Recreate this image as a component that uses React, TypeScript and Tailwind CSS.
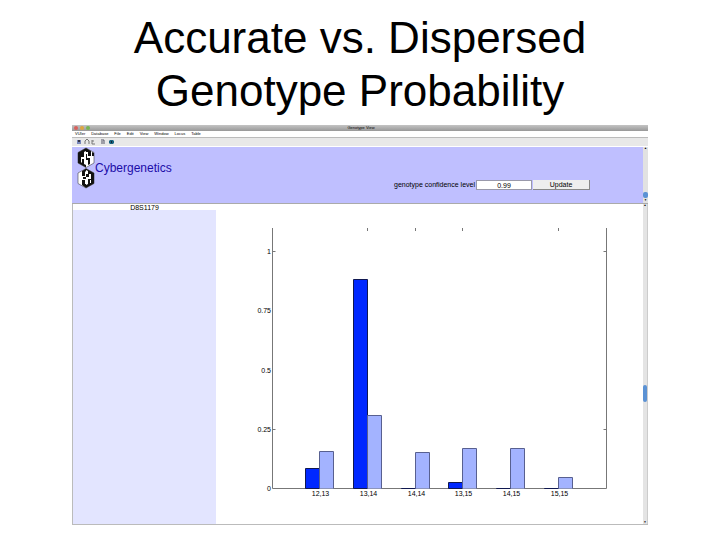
import React, { useState } from 'react';

interface Genotype {
  label: string;
  accurate: number;
  dispersed: number;
}

const menus = ['VUIer', 'Database', 'File', 'Edit', 'View', 'Window', 'Locus', 'Table'];

const genotypes: Genotype[] = [
  { label: '12,13', accurate: 0.086, dispersed: 0.158 },
  { label: '13,14', accurate: 0.881, dispersed: 0.306 },
  { label: '14,14', accurate: 0.001, dispersed: 0.151 },
  { label: '13,15', accurate: 0.026, dispersed: 0.17 },
  { label: '14,15', accurate: 0.001, dispersed: 0.168 },
  { label: '15,15', accurate: 0.001, dispersed: 0.047 },
];

const yLabels = [0, 0.25, 0.5, 0.75, 1];
const yTicks = [0.25, 1];
const topTicks = [1, 2, 3, 5];

// Plot box inside the chart's viewBox
const LEFT = 56.5;
const RIGHT = 390.5;
const TOP = 18;
const BASE = 278.5;
const UNIT = 237;

const xOf = (index: number) => Math.floor(56 + 47.7 * (index + 1)) + 0.5;
const yOf = (value: number) => Math.floor(BASE - UNIT * value) + 0.5;

function Logo() {
  return (
    <svg viewBox="0 0 18 42" className="h-[42px] w-[18px]" aria-hidden="true">
      <path d="M9 1L17 5.500V16L9 20.500 1 16V5.500z" fill="#fff" />
      <path d="M9 1L1 5.500V16L9 20.500V18L7 17V12H5V16L4 15V10H7V5L9 4z" fill="#111" />
      <path d="M9 1L14 4V9H11V5H9zM9 7H10V11H13V17L11 18V13H9zM15 5L17 6V9H15z" fill="#111" />
      <path d="M9 1L17 5.500V16L9 20.500 1 16V5.500z" fill="none" stroke="#222" strokeWidth="0.500" />
      <path d="M9 21.500L17 26V36.500L9 41 1 36.500V26z" fill="#fff" />
      <path d="M9 21.500L17 26V36.500L9 41V38L11 37V32H14V27H12V30H9V27H11V24L9 23z" fill="#111" />
      <path d="M9 21.500L5 24V29H8V25L9 24zM9 41L5 38V33H8V37H9zM6 30H9V32H6z" fill="#111" />
      <path d="M13 33H14V36H13z" fill="#fff" />
      <path d="M9 21.500L17 26V36.500L9 41 1 36.500V26z" fill="none" stroke="#222" strokeWidth="0.500" />
    </svg>
  );
}

function Toolbar() {
  return (
    <svg viewBox="0 0 40 8" className="h-2 w-10" aria-hidden="true">
      <path d="M1 2H5V6H1z" fill="#7888bb" />
      <path d="M2 2H4V4H2z" fill="#334" />
      <path d="M9 6V3L11 1 13 3V6M16 2V6H19M16 3H18" fill="none" stroke="#777" />
      <path d="M25 2H28V6M26 3V6" fill="none" stroke="#556" />
      <path d="M34 2H37L38 3V5L37 6H34L33 5V3z" fill="#17627e" />
      <path d="M35 3H36V5H35z" fill="#123" />
    </svg>
  );
}

function Chart() {
  return (
    <svg
      viewBox="0 0 427 314"
      className="block w-full"
      role="img"
      aria-label="Genotype probability"
      fontFamily="'Liberation Sans', Arial, sans-serif"
      fontSize="7"
    >
      <path d={`M${LEFT} ${TOP}V${BASE}H${RIGHT}V${TOP}`} fill="none" stroke="#777" />
      {genotypes.map((g, i) => {
        const x = xOf(i);
        return (
          <g key={g.label}>
            <path d={`M${x - 14} ${BASE}V${yOf(g.accurate)}H${x}V${BASE}z`} fill="#0028ff" stroke="#101850" />
            <path d={`M${x} ${BASE}V${yOf(g.dispersed)}H${x + 14}V${BASE}`} fill="#a3b3ff" stroke="#586090" />
            <text x={x + 1} y="286" textAnchor="middle">{g.label}</text>
          </g>
        );
      })}
      {topTicks.map((i) => (
        <path key={i} d={`M${xOf(i)} ${TOP}v3`} stroke="#777" />
      ))}
      {yTicks.map((tick) => (
        <path key={tick} d={`M${LEFT} ${yOf(tick)}h3M${RIGHT} ${yOf(tick)}h-3`} stroke="#777" />
      ))}
      {yLabels.map((value) => (
        <text key={value} x="55" y={yOf(value) + 2.5} textAnchor="end">{value}</text>
      ))}
    </svg>
  );
}

export default function GenotypeView() {
  const [confidence, setConfidence] = useState('0.99');

  return (
    <main className="min-h-screen bg-white pt-[11px] font-['Liberation_Sans',Arial,sans-serif] text-black">
      <h1 className="text-center text-[44px] leading-[53px]">
        Accurate vs. Dispersed
        <br />
        Genotype Probability
      </h1>

      <section className="mx-[10%] mt-2">
        <header className="flex h-[6px] items-center bg-linear-to-b from-[#c4c4c4] to-[#989898]">
          <div className="flex flex-1 gap-[2px] pl-[2px]">
            <span className="size-[4px] rounded-full bg-[#d9605c]" />
            <span className="size-[4px] rounded-full bg-[#dfa63f]" />
            <span className="size-[4px] rounded-full bg-[#76b552]" />
          </div>
          <h2 className="text-[4px] leading-[6px]">Genotype View</h2>
          <div className="flex-1" />
        </header>

        <nav className="flex h-[7px] items-center gap-[6px] border-b border-[#bbb] bg-white pl-[3px] text-[4px] leading-[6px]">
          {menus.map((menu) => (
            <button key={menu} type="button">{menu}</button>
          ))}
        </nav>
        <div className="flex h-[9px] border-b border-white bg-[#e8e8e8] pl-1">
          <Toolbar />
        </div>

        <div className="flex h-[57px] border-b border-[#aaa] bg-[#bfbfff]">
          <div className="flex flex-1 items-start justify-between pl-[5px]">
            <div className="flex items-center text-[#1c0ca8]">
              <Logo />
              <span className="text-[12px] leading-4">Cybergenetics</span>
            </div>
            <form onSubmit={(e) => e.preventDefault()} className="mr-[53px] mt-[33px] flex h-[10px] items-center gap-[1px] text-[7px] leading-[8px]">
              <label htmlFor="confidence">genotype confidence level</label>
              <input
                id="confidence"
                value={confidence}
                onChange={(e) => setConfidence(e.target.value)}
                className="h-[10px] w-[56px] border border-[#99a] bg-white text-center"
              />
              <button type="submit" className="h-[10px] w-[57px] border-r border-b border-[#888] bg-[#eee]">Update</button>
            </form>
          </div>
          <div className="flex w-[5px] flex-col justify-between bg-[#e2e2e2]">
            <span className="h-[3px] text-center text-[3px] leading-[3px]">▲</span>
            <div>
              <div className="h-[6px] rounded-xs bg-[#5b92d4]" />
              <div className="h-[5px] text-center text-[3px] leading-[5px]">▼</div>
            </div>
          </div>
        </div>

        <div className="flex border-b border-l border-[#bbb]">
          <div className="flex-1">
            <h3 className="h-[6px] w-[143px] text-center text-[7px] leading-[8px]">D8S1179</h3>
            <div className="flex">
              <aside className="w-[143px] bg-[#e3e5ff]" />
              <div className="flex-1">
                <Chart />
              </div>
            </div>
          </div>
          <div className="flex w-[5px] flex-col items-stretch justify-between border-r border-[#ccc] bg-[#e4e4e4]">
            <span className="h-[3px] text-center text-[3px] leading-[3px]">▲</span>
            <div className="mt-[58px] h-[17px] rounded-xs bg-[#5b92d4]" />
            <span className="h-[3px] text-center text-[3px] leading-[3px]">▼</span>
          </div>
        </div>
      </section>
    </main>
  );
}
